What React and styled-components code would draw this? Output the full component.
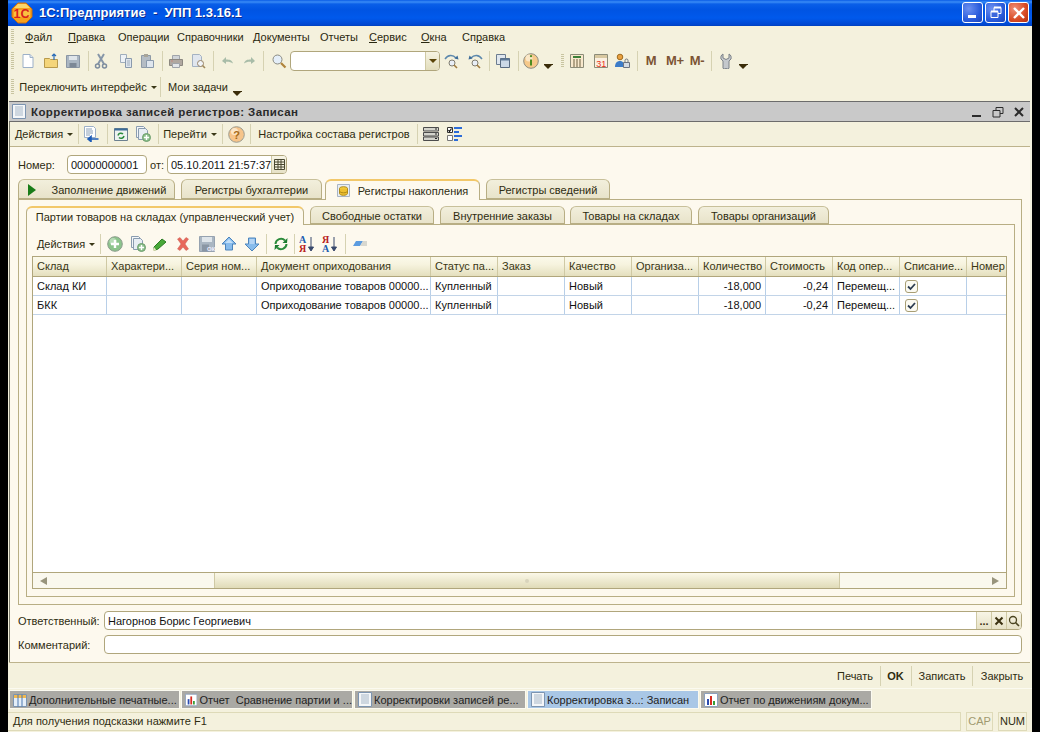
import React from 'react';
import styled, { createGlobalStyle } from 'styled-components';

const Global = createGlobalStyle`
  html, body { margin: 0; padding: 0; background: #000; }
  * { box-sizing: border-box; }
  body { font-family: "Liberation Sans", Arial, sans-serif; font-size: 11px; color: #2e2c10; }
`;

const Page = styled.div`
  width: 1040px; height: 732px; background: #000; padding: 0 8px; overflow: hidden;
`;
const Win = styled.div`
  height: 732px; background: #f4f1dd; display: flex; flex-direction: column;
`;
const TitleBar = styled.div`
  height: 26px; flex: none; display: flex; align-items: center; padding: 0 3px 1px 3px;
  background: linear-gradient(#0a5ce6 0, #3a8cf6 2px, #0a5fe8 4px, #0054e3 10px, #0059ec 18px, #0046cf 25px, #0040b8 26px);
`;
const TitleText = styled.div`
  margin-left: 6px; flex: 1; font-size: 13px; font-weight: bold; color: #fff; letter-spacing: 0;
  text-shadow: 1px 1px 0 #0a2a90; white-space: pre;
`;
const WinBtn = styled.div`
  width: 21px; height: 21px; margin-left: 2px; border: 1px solid #fff; border-radius: 3px;
  display: flex; align-items: center; justify-content: center;
  background: ${p => p.$close ? 'radial-gradient(circle at 30% 30%, #f09078, #d84a24 60%, #b03010)' : 'radial-gradient(circle at 30% 30%, #6c90f0, #2a5cdc 60%, #1c44b8)'};
`;
const Bar = styled.div`
  flex: none; height: ${p => p.$h}px; display: flex; align-items: center; padding-left: 3px; color: #2e2c10;
`;
const Grip = styled.div`
  width: 3px; height: ${p => p.$h || 18}px; flex: none; margin-right: ${p => p.$mr ?? 5}px;
  background: repeating-linear-gradient(#c8c4a0 0 1px, #f4f1dd 1px 2px);
`;
const MenuItem = styled.div`
  width: ${p => p.$w}px; flex: none; font-size: 11px; color: #2a2810; white-space: nowrap;
  u { text-underline-offset: 1px; }
`;
const Slot = styled.div`
  width: ${p => p.$w}px; margin-left: ${p => p.$ml || 0}px; flex: none; display: flex; align-items: center; justify-content: center;
  white-space: nowrap; height: 100%; color: #2e2c10; font-size: 11px;
  font-weight: ${p => p.$bold ? 'bold' : 'normal'};
`;
const Sep = styled.div`
  width: 1px; height: ${p => p.$h || 20}px; flex: none; background: #d6d2b2;
`;
const Combo = styled.div`
  width: 150px; height: 20px; flex: none; border: 1px solid #b0a67c; border-radius: 4px; background: #fff;
  display: flex; justify-content: flex-end; overflow: hidden;
`;
const ComboBtn = styled.div`
  width: 14px; background: linear-gradient(#f6f3e2, #e2ddbc); border-left: 1px solid #cfc9a4;
  display: flex; align-items: center; justify-content: center;
`;
const Caret = styled.span`
  display: inline-block; width: 0; height: 0; margin-left: 4px; margin-top: 1px;
  border-left: 3px solid transparent; border-right: 3px solid transparent; border-top: 3px solid #3a3818;
`;
const ComboCaret = styled.span`
  display: block; width: 0; height: 0;
  border-left: 4px solid transparent; border-right: 4px solid transparent; border-top: 4px solid #5a4408;
`;
const DropMark = styled.span`
  display: block; width: 9px; margin-top: 12px; border-top: 1px solid #3a2c08;
  &::after { content: ''; display: block; width: 0; height: 0; margin: 0 auto;
    border-left: 4px solid transparent; border-right: 4px solid transparent; border-top: 4px solid #3a2c08; }
`;
const MBtn = styled.span`
  font-size: 13px; font-weight: bold; color: #7c5434; letter-spacing: -.3px;
`;
const Mdi = styled.div`
  flex: 1; min-height: 0; display: flex; flex-direction: column; margin: 0 2px 0 1px;
  border-left: 1px solid #7a7a6a;
`;
const DocHead = styled.div`
  height: 21px; flex: none; background: #c9c9c9; border-top: 1px solid #6c6c6c; border-bottom: 1px solid #6c6c6c;
  display: flex; align-items: center; padding-left: 3px; margin-left: -1px;
`;
const DocTitle = styled.div`
  flex: 1; margin-left: 5px; font-weight: bold; font-size: 11.5px; letter-spacing: .4px; color: #2a2a2a;
`;
const DocTool = styled(Bar)`
  height: 25px; border-bottom: 1px solid #bdb38c; padding-left: 0;
`;
const Form = styled.div`
  flex: 1; min-height: 0; background: #fdf9ee; display: flex; flex-direction: column; padding: 8px;
`;
const Row = styled.div`
  display: flex; align-items: center; height: 19px; flex: none; color: #2e2c10; margin-top: ${p => p.$mt || 0}px;
`;
const Label = styled.div`
  width: ${p => p.$w}px; flex: none; white-space: nowrap; padding-left: ${p => p.$pl || 0}px;
`;
const Input = styled.div`
  width: ${p => p.$w ? p.$w + 'px' : 'auto'}; flex: ${p => p.$w ? 'none' : 1}; height: 19px; border: 1px solid #b0a67c; border-radius: 4px;
  background: #fff; color: #111; display: flex; align-items: center; padding-left: 3px; overflow: hidden;
  justify-content: space-between; white-space: nowrap;
`;
const InBtn = styled.div`
  width: ${p => p.$w || 15}px; height: 100%; flex: none; background: linear-gradient(#f8f5e6, #e6e1c6);
  border-left: 1px solid #cfc9a4; display: flex; align-items: center; justify-content: center;
  font-weight: bold; color: #3a3010;
`;
const InBtns = styled.div`display: flex; height: 100%;`;
const Tabs = styled.div`
  display: flex; flex: none; margin-top: ${p => p.$mt}px; height: ${p => p.$h}px; align-items: flex-end;
`;
const Tab = styled.div`
  width: ${p => p.$w}px; flex: none; margin-right: ${p => p.$gap}px; height: ${p => p.$active ? p.$h + 1 : p.$h}px;
  margin-bottom: ${p => p.$active ? -1 : 0}px; position: relative; z-index: 1;
  padding-top: ${p => p.$active ? 0 : 1}px;
  border: 1px solid #b8ae84; border-bottom: ${p => p.$active ? 'none' : '1px solid #b8ae84'};
  border-top: ${p => p.$active ? '2px solid #f2c86a' : '1px solid #c8c09a'};
  border-radius: 6px 6px 0 0;
  background: ${p => p.$active ? '#fdf9ee' : 'linear-gradient(#f2efdc, #e8e3ca)'};
  display: flex; align-items: center; justify-content: center; gap: 8px; white-space: nowrap;
  color: #2e2c10; font-size: 11px;
`;
const TabLabel = styled.span`margin-left: ${p => p.$ml || 0}px;`;
const Panel = styled.div`
  flex: 1; min-height: 0; border: 1px solid #b8ae84; display: flex; flex-direction: column;
  padding: ${p => p.$pad};
`;
const GridTool = styled(Bar)`
  height: 25px; padding-left: 0;
`;
const Table = styled.div`
  flex: 1; min-height: 0; border: 1px solid #b0a67c; background: #fff; display: flex; flex-direction: column;
`;
const HeadRow = styled.div`
  display: flex; height: 20px; flex: none; border-bottom: 1px solid #b0a67c;
  background: linear-gradient(#fbf9ea, #f6f3de 40%, #e4dfbe);
`;
const HeadCell = styled.div`
  width: ${p => p.$w}px; flex: none; padding-left: 4px; border-right: 1px solid #cfc9a4; line-height: 19px;
  white-space: nowrap; overflow: hidden; color: #3a3714; &:last-child { border-right: none; }
`;
const DataRow = styled.div`
  display: flex; height: 19px; flex: none; border-bottom: 1px solid #c2d4e8;
`;
const Cell = styled.div`
  width: ${p => p.$w}px; flex: none; padding: 0 4px; border-right: 1px solid #b8cfe8; line-height: 18px; white-space: nowrap;
  overflow: hidden; color: #111; text-align: ${p => p.$right ? 'right' : 'left'};
  &:last-child { border-right: none; }
`;
const Check = styled.div`
  width: 13px; height: 13px; margin: 3px 0 0 1px; border: 1px solid #a89e74; border-radius: 3px; background: #fbfaf2;
  display: flex; align-items: center; justify-content: center;
`;
const Blank = styled.div`flex: 1; min-height: 0;`;
const Scroll = styled.div`
  height: 16px; flex: none; border-top: 1px solid #b0a67c; display: flex; background: #faf8ee;
`;
const ScrollBtn = styled.div`
  width: 21px; flex: none; display: flex; align-items: center; justify-content: center;
`;
const Track = styled.div`width: ${p => p.$w}px; flex: none;`;
const Thumb = styled.div`
  flex: 1; background: linear-gradient(#fbf8e8, #e0dbb8); display: flex; align-items: center; justify-content: center;
  border-left: 1px solid #cfc9a4; border-right: 1px solid #cfc9a4;
`;
const Dot = styled.div`width: 4px; height: 4px; border-radius: 50%; background: #d8d4bc;`;
const Arrow = styled.div`
  width: 0; height: 0; border-top: 4px solid transparent; border-bottom: 4px solid transparent;
  ${p => p.$dir === 'l' ? 'border-right: 7px solid #98947c;' : 'border-left: 7px solid #98947c;'}
`;
const Cmd = styled.div`
  height: 26px; flex: none; border-top: 1px solid #bdb38c; background: #f4f1dd; display: flex; align-items: center;
  margin-left: -1px;
`;
const Task = styled.div`
  height: 22px; flex: none; border-top: 1px solid #fbfaf0; background: #f4f1dd; display: flex; align-items: center; padding: 0 0 0 1px; gap: 1px;
`;
const TaskTab = styled.div`
  width: ${p => p.$w}px; height: 19px; flex: none; border: 1px solid #fbfaf0; display: flex; align-items: center; gap: 2px; padding-left: 3px;
  background: ${p => p.$active ? '#a9c7e6' : '#aaa9a4'}; color: #222; white-space: pre; overflow: hidden;
`;
const Status = styled.div`
  height: 22px; flex: none; display: flex; align-items: center; padding: 0 5px 0 0; gap: 5px;
`;
const StatusMain = styled.div`
  flex: 1; height: 19px; line-height: 17px; padding-left: 5px; border: 1px solid #dedab8; border-left: none; color: #2e2c10;
`;
const StatusKey = styled.div`
  width: ${p => p.$w}px; height: 19px; border: 1px solid #dedab8; line-height: 17px; text-align: center;
  color: ${p => p.$off ? '#a09a70' : '#2e2c10'};
`;

const Ic = ({ children, w = 16, h = 16 }) => <svg width={w} height={h} viewBox={`0 0 ${w} ${h}`}>{children}</svg>;

const icons = {
  logo: <Ic w={22} h={22}><path d="M7 1h8l6 6v8l-6 6H7l-6-6V7z" fill="#f6a01c" stroke="#c86c10"/><path d="M7 2h8l4 4H3z" fill="#fbd56a"/><path d="M3 8h16v7H3z" fill="#fbc040"/><text x="2.500" y="16" fontFamily="Liberation Sans" fontSize="12.500" fontWeight="bold" fill="#d8201c">1С</text></Ic>,
  doc: <Ic><path d="M3 1.500h7l3 3v10H3z" fill="#fff" stroke="#9cb0c8"/><path d="M10 1.500v3h3" fill="#dce6f0" stroke="#9cb0c8"/></Ic>,
  open: <Ic><path d="M1.500 5.500h5l1 1h7v8h-13z" fill="#f4d57a" stroke="#b89a4c"/><path d="M11 1v6M9 3l2-2 2 2" fill="none" stroke="#2a6cb8" strokeWidth="1.200"/></Ic>,
  save: <Ic><path d="M1.500 2.500h13v12h-13z" fill="#aab6c2" stroke="#8a96a4"/><path d="M4 3h8v4H4z" fill="#dfe5ea"/><path d="M4.500 10h7v4.500h-7z" fill="#7c8896"/></Ic>,
  cut: <Ic><path d="M5 1l6 10M11 1L5 11" stroke="#8696a8" strokeWidth="2" fill="none"/><circle cx="4.500" cy="13" r="2" fill="none" stroke="#7c8c9e" strokeWidth="1.500"/><circle cx="11.500" cy="13" r="2" fill="none" stroke="#7c8c9e" strokeWidth="1.500"/></Ic>,
  copy: <Ic><path d="M2.500 1.500h6v8h-6z" fill="#eef2f6" stroke="#a0aebc"/><path d="M7.500 5.500h6v9h-6z" fill="#dfe6ee" stroke="#8a9aac"/><path d="M9 8h3M9 10h3M9 12h3" stroke="#a0aebc"/></Ic>,
  paste: <Ic><path d="M2.500 2.500h9v12h-9z" fill="#b4bcc4" stroke="#8e9aa6"/><path d="M5 1h4v3H5z" fill="#a8a498"/><path d="M7.500 7.500h7v7h-7z" fill="#dfe6ee" stroke="#8a9aac"/></Ic>,
  print: <Ic><path d="M4.500 2.500h7v4h-7z" fill="#d0d4d8" stroke="#a0a4aa"/><path d="M1.500 6.500h13v6h-13z" fill="#b0a8a0" stroke="#8c8880"/><path d="M4.500 10.500h7v4h-7z" fill="#e4e6e8" stroke="#a0a4aa"/><path d="M3 8h2" stroke="#c08880"/></Ic>,
  preview: <Ic><path d="M2.500 1.500h7l2 2v10h-9z" fill="#e0e6ee" stroke="#a4b2c2"/><circle cx="10.500" cy="10.500" r="3" fill="#f0f4f8" stroke="#988468"/><path d="M12.500 12.500l2.500 2.500" stroke="#a08a5c" strokeWidth="1.600"/></Ic>,
  undo: <Ic><path d="M2 8l4-4v2.500c4 0 6 .5 7 4-2-1.500-4-2-7-1.800V11z" fill="#a8bca8"/></Ic>,
  redo: <Ic><path d="M14 8l-4-4v2.500c-4 0-6 .5-7 4 2-1.500 4-2 7-1.800V11z" fill="#a8bca8"/></Ic>,
  find: <Ic><circle cx="6.500" cy="6.500" r="4.500" fill="#e4eef8" stroke="#8a8a80"/><path d="M10 10l4.500 4.500" stroke="#b0843c" strokeWidth="2.200"/></Ic>,
  findNext: <Ic><circle cx="8" cy="10" r="3" fill="#e8eef6" stroke="#807c70"/><path d="M10 12l3 3" stroke="#a07c40" strokeWidth="1.600"/><path d="M1 6c3-4.500 8-4.500 11-1" stroke="#5c88ac" fill="none" strokeWidth="1.400"/><path d="M14.500 6.500l-1-4-3 3z" fill="#3c6c98"/></Ic>,
  findPrev: <Ic><circle cx="8" cy="10" r="3" fill="#e8eef6" stroke="#807c70"/><path d="M10 12l3 3" stroke="#a07c40" strokeWidth="1.600"/><path d="M15 6c-3-4.500-8-4.500-11-1" stroke="#5c88ac" fill="none" strokeWidth="1.400"/><path d="M1.500 6.500l1-4 3 3z" fill="#3c6c98"/></Ic>,
  windows: <Ic><path d="M1.500 1.500h9v10h-9z" fill="#dfe6ee" stroke="#6c7c90"/><path d="M5.500 5.500h9v9h-9z" fill="#cbd8e6" stroke="#586a80"/><path d="M5.500 5.500h9v2h-9z" fill="#5c7896"/></Ic>,
  info: <Ic><circle cx="8" cy="8" r="7.300" fill="#f6c98a" stroke="#8c8c80"/><circle cx="6" cy="5" r="3.500" fill="#fbe8c8"/><path d="M8 3.200h.01" stroke="#4c8c20" strokeWidth="2.200" strokeLinecap="round"/><path d="M8 6.500v6" stroke="#4c8c20" strokeWidth="2"/></Ic>,
  calc: <Ic w={14} h={14}><path d="M.5.500h13v13H.5z" fill="#f8e8cc" stroke="#8c8c78"/><path d="M3 2h8v2H3z" fill="#3c8038"/><path d="M3 6h2M6 6h2M9 6h2M3 8h2M6 8h2M9 8h2M3 10h2M6 10h2M9 10h2M3 12h2M6 12h2M9 12h2" stroke="#6c6040"/></Ic>,
  cal: <Ic w={14} h={14}><path d="M.5.500h13v13H.5z" fill="#fbf0e0" stroke="#8c8c78"/><path d="M1 1h12v3H1z" fill="#d8c8a0"/><text x="2.200" y="12.500" fontFamily="Liberation Sans" fontSize="9" fill="#e83018">31</text></Ic>,
  userLock: <Ic><circle cx="6" cy="4" r="2.800" fill="#e8a040" stroke="#a06c20"/><path d="M1 14c0-4 2-6 5-6s4 2 4 6z" fill="#3c7cc8"/><path d="M9.500 9.500h6v5h-6z" fill="#d4dce4" stroke="#6c7480"/><path d="M11 9.500v-2a1.500 1.500 0 0 1 3 0v2" fill="none" stroke="#6c7480"/></Ic>,
  wrench: <Ic><path d="M5 1v4l3 1.500L11 5V1c2 1 2.500 3 2 5l-2 2v6a1.500 1.500 0 0 1-3 1 1.500 1.500 0 0 1-3-1V8L3 6C2.500 4 3 2 5 1z" fill="#c4c8cc" stroke="#7c8288"/></Ic>,
  docArrow: <Ic><path d="M1.500.5h9l2 2v9h-11z" fill="#fff" stroke="#9cb0c8"/><path d="M3 3h6M3 5h7M3 7h7M3 9h4" stroke="#8aa0b8"/><path d="M15.500 13H8M8 10.500L5 13l3 2.500z" stroke="#1c5cb8" fill="#1c5cb8" strokeWidth="1.600"/></Ic>,
  winRefresh: <Ic><path d="M1.500 2.500h13v12h-13z" fill="#eef2f0" stroke="#6c8090"/><path d="M1.500 2.500h13v2h-13z" fill="#3c6c98"/><path d="M5 9.500a3 3 0 0 1 5-1.500M11 10a3 3 0 0 1-5 1.500" stroke="#2c8c3c" fill="none" strokeWidth="1.500"/></Ic>,
  copyAdd: <Ic><path d="M1.500.5h7l2 2v9h-9z" fill="#f4f6f8" stroke="#8a9cb0"/><path d="M3.500 2.500h7l2 2v9h-9z" fill="#e8eef4" stroke="#8a9cb0"/><circle cx="11.500" cy="11.500" r="4" fill="#8cc08c" stroke="#6c9c6c"/><path d="M11.500 9v5M9 11.500h5" stroke="#fff" strokeWidth="1.400"/></Ic>,
  help: <Ic w={17} h={17}><circle cx="8.500" cy="8.500" r="7.800" fill="#f6c48a" stroke="#9c9c90"/><circle cx="6.500" cy="5.500" r="3.500" fill="#fbe6c8"/><text x="5.200" y="13" fontFamily="Liberation Sans" fontSize="11" fontWeight="bold" fill="#a86a18">?</text></Ic>,
  rows: <Ic><path d="M.5 1.500h15v3.500H.5zM.5 6.500h15v3.500H.5zM.5 11h15v3.500H.5z" fill="#d4d4cc" stroke="#4c4c4c"/><path d="M12 2.500h2v1h-2zM12 7.500h2v1h-2zM12 12h2v1h-2z" fill="#222"/></Ic>,
  checks: <Ic><path d="M.5 1.500h5v5h-5z" fill="#fff" stroke="#333"/><path d="M1.500 4l1 1.500 2-3" stroke="#111" fill="none" strokeWidth="1.200"/><path d="M.5 9.500h5v5h-5z" fill="#fff" stroke="#777"/><path d="M7 1h8v2H7zM7 5h5v2H7zM7 9h8v2H7zM7 13h4v2H7z" fill="#2c6cd8"/></Ic>,
  add: <Ic><circle cx="8" cy="8" r="7.300" fill="#8cc48c" stroke="#8c9c8c"/><circle cx="6" cy="5.500" r="3.500" fill="#b8dcb8"/><path d="M8 4v8M4 8h8" stroke="#fff" strokeWidth="2.400"/></Ic>,
  pencil: <Ic><path d="M2 11l8-8 4 3-8 7-4 1.500z" fill="#48a838" stroke="#2c7c24"/><path d="M2 11l2.500 3.500L1 15z" fill="#e8e4c0"/></Ic>,
  del: <Ic><path d="M2.500 3L5 1.500 8 5l3-3.500L13.500 3 10 8l3.500 5-2.500 1.500L8 11l-3 3.500L2.500 13 6 8z" fill="#e8685c" stroke="#c85c50" strokeWidth=".5"/></Ic>,
  saveOk: <Ic><path d="M.5.5h15v15H.5z" fill="#aab6c2" stroke="#96a2b0"/><path d="M3 1h10v5H3z" fill="#dfe5ea"/><path d="M3 8.500h7v7H3z" fill="#8a96a4"/><text x="8" y="15" fontFamily="Liberation Sans" fontSize="6" fontWeight="bold" fill="#eef">ОК</text></Ic>,
  up: <Ic><path d="M8 1l7 7h-3.500v6h-7V8H1z" fill="#88bcec" stroke="#4c84bc"/><path d="M8 3l4 4H4z" fill="#c4e0f8"/></Ic>,
  down: <Ic><path d="M8 15L1 8h3.500V2h7v6H15z" fill="#88bcec" stroke="#4c84bc"/><path d="M5.500 3h5v5h-5z" fill="#b4d4f4"/></Ic>,
  refresh: <Ic><path d="M2.500 8a5.500 5.500 0 0 1 9.500-3.500M13.500 8A5.500 5.500 0 0 1 4 11.500" stroke="#2c8c3c" strokeWidth="2" fill="none"/><path d="M14.500 2l-.5 5h-4.500zM1.500 14l.5-5h4.500z" fill="#1c7c30"/></Ic>,
  sortAz: <Ic w={20} h={18}><text x="0" y="8" fontFamily="Liberation Serif" fontSize="10" fontWeight="bold" fill="#1c5cb0">A</text><text x="0" y="17" fontFamily="Liberation Serif" fontSize="10" fontWeight="bold" fill="#b82020">Я</text><path d="M12 2v13M9.500 12l2.500 4 2.500-4z" stroke="#38486c" fill="#38486c"/></Ic>,
  sortZa: <Ic w={20} h={18}><text x="0" y="8" fontFamily="Liberation Serif" fontSize="10" fontWeight="bold" fill="#b82020">Я</text><text x="0" y="17" fontFamily="Liberation Serif" fontSize="10" fontWeight="bold" fill="#1c5cb0">A</text><path d="M12 2v13M9.500 12l2.500 4 2.500-4z" stroke="#38486c" fill="#38486c"/></Ic>,
  eraser: <Ic><path d="M1 10l3-5h7l-3 5z" fill="#5c9ce0"/><path d="M8 10l3-5h4v5z" fill="#d8d8d0"/></Ic>,
  play: <Ic w={10} h={14}><path d="M1 1l8 6-8 6z" fill="#187c18"/></Ic>,
  coins: <Ic w={13} h={13}><path d="M.5.5h12v12H.5z" fill="#e8eef4" stroke="#a8b4c4"/><ellipse cx="6.500" cy="4.500" rx="4" ry="1.800" fill="#f4d040" stroke="#b08a18"/><path d="M2.500 4.500v5c0 1 1.800 1.800 4 1.800s4-.8 4-1.800v-5" fill="#eec030" stroke="#b08a18"/><path d="M2.500 7c0 1 1.800 1.800 4 1.800s4-.8 4-1.800" fill="none" stroke="#b08a18"/></Ic>,
  tblTask: <Ic w={14} h={14}><path d="M.5 1.500h13v12H.5z" fill="#e4eef8" stroke="#7c94b0"/><path d="M1 2h12v3H1z" fill="#f0b850"/><path d="M5 1.500v12M9 1.500v12" stroke="#4c78b0"/></Ic>,
  chart: <Ic w={14} h={14}><path d="M.5.5h13v13H.5z" fill="#fff" stroke="#8ca0bc"/><path d="M3 6h2v6H3z" fill="#2c4cb0"/><path d="M6 3h2v9H6z" fill="#d82c20"/><path d="M9 8h2v4H9z" fill="#38a038"/></Ic>,
  docTask: <Ic w={14} h={15}><path d="M.5.5h13v14H.5z" fill="#f4f6f8" stroke="#7c94b0"/><path d="M3 3h8M3 5h8M3 7h8M3 9h8M3 11h8" stroke="#a8b8c8"/></Ic>,
  check: <Ic w={9} h={9}><path d="M1 4.500l2.500 2.500L8 2" fill="none" stroke="#2c3c50" strokeWidth="1.800"/></Ic>,
  tinyX: <Ic w={10} h={10}><path d="M1.500 1.500l7 7M8.500 1.500l-7 7" stroke="#3a3010" strokeWidth="2"/></Ic>,
  tinyFind: <Ic w={12} h={12}><circle cx="5" cy="5" r="3.500" fill="none" stroke="#4a4420" strokeWidth="1.300"/><path d="M7.500 7.500l3.500 3.500" stroke="#4a4420" strokeWidth="1.600"/></Ic>,
  dateBtn: <Ic w={11} h={11}><path d="M.5.5h10v10H.5z" fill="#f6f3e2" stroke="#4a4830"/><path d="M.5 3h10M.5 5.500h10M.5 8h10M4 .5v10M7 .5v10" stroke="#4a4830"/></Ic>,
  min: <Ic w={10} h={10}><path d="M0 7h8v3H0z" fill="#fff"/></Ic>,
  max: <Ic w={14} h={14}><path d="M5 1.500h7v6H5z" fill="none" stroke="#fff"/><path d="M5 1.500h7" stroke="#fff" strokeWidth="2"/><path d="M2 5.500h7v6H2z" fill="#3a66dc" stroke="#fff"/><path d="M2 5.500h7" stroke="#fff" strokeWidth="2"/></Ic>,
  close: <Ic w={14} h={14}><path d="M2 2l10 10M12 2L2 12" stroke="#fff" strokeWidth="2.400"/></Ic>,
  dMin: <Ic w={12} h={12}><path d="M1 9h9v2H1z" fill="#2c2c2c"/></Ic>,
  dMax: <Ic w={12} h={12}><path d="M4 1.500h7v6H4z" fill="none" stroke="#2c2c2c"/><path d="M1 4.500h7v6.500H1z" fill="#c9c9c9" stroke="#2c2c2c"/></Ic>,
  dClose: <Ic w={12} h={12}><path d="M2 2l8 8M10 2l-8 8" stroke="#2c2c2c" strokeWidth="2"/></Ic>,
};

// Each item: [centre x, node, width, bold]. The gaps between items follow from the centres.
const Items = ({ start, items }) => {
  let edge = start;
  return items.map((it, i) => {
    const w = it[1] === '|' ? 1 : (it[2] || 16);
    const left = it[0] - w / 2;
    const ml = left - edge;
    edge = left + w;
    return <Slot key={i} $w={w} $ml={ml} $bold={it[3]}>{it[1] === '|' ? <Sep /> : it[1]}</Slot>;
  });
};

const Txt = ({ t }) => <>{t}<Caret /></>;

const menu = [
  [<><u>Ф</u>айл</>, 43], [<><u>П</u>равка</>, 50], ['Операции', 59], ['Справочники', 76], ['Документы', 67],
  ['Отчеты', 49], [<><u>С</u>ервис</>, 52], [<><u>О</u>кна</>, 41], [<>Сп<u>р</u>авка</>, 60],
];

const tb1 = [
  [28, icons.doc], [51, icons.open], [73, icons.save], [88, '|'], [101, icons.cut], [126, icons.copy], [147, icons.paste], [162, '|'],
  [176, icons.print], [198, icons.preview], [213, '|'], [228, icons.undo], [249, icons.redo], [263, '|'], [279, icons.find],
  [365, <Combo><ComboBtn><ComboCaret /></ComboBtn></Combo>, 150], [452, icons.findNext], [475, icons.findPrev], [489, '|'], [503, icons.windows],
  [518, '|'], [531, icons.info], [548, <DropMark />, 9], [562, <Grip $h={14} $mr={0} />, 3], [577, icons.calc], [601, icons.cal], [622, icons.userLock], [637, '|'],
  [651, <MBtn>M</MBtn>], [675, <MBtn>M+</MBtn>, 20], [697, <MBtn>M-</MBtn>, 20], [711, '|'], [726, icons.wrench], [743, <DropMark />, 9],
];
const tb2 = [[88, <Txt t="Переключить интерфейс" />, 140], [160, '|'], [198, 'Мои задачи', 62], [237, <DropMark />, 9]];
const docTb = [
  [44, <Txt t="Действия" />, 60], [78, '|'], [91, icons.docArrow], [107, '|'], [121, icons.winRefresh], [143, icons.copyAdd], [158, '|'],
  [190, <Txt t="Перейти" />, 54], [222, '|'], [236, icons.help, 17], [250, '|'], [334, 'Настройка состава регистров', 156], [417, '|'], [431, icons.rows], [455, icons.checks],
];
const gridTb = [
  [66, <Txt t="Действия" />, 60], [100, '|'], [115, icons.add], [138, icons.copyAdd], [160, icons.pencil], [183, icons.del], [207, icons.saveOk],
  [229, icons.up], [252, icons.down], [266, '|'], [281, icons.refresh], [294, '|'], [309, icons.sortAz, 20], [332, icons.sortZa, 20], [345, '|'], [360, icons.eraser],
];
const cols = [
  ['Склад', 74], ['Характери...', 75], ['Серия ном...', 75], ['Документ оприходования', 174], ['Статус па...', 67], ['Заказ', 67],
  ['Качество', 67], ['Организа...', 67], ['Количество', 67], ['Стоимость', 67], ['Код опер...', 67], ['Списание...', 67], ['Номер', 41],
];
const rows = [['Склад КИ'], ['БКК']];
const outerTabs = [
  [157, 6, <>{icons.play}<TabLabel $ml={7}>Заполнение движений</TabLabel></>], [141, 3, 'Регистры бухгалтерии'],
  [155, 6, <>{icons.coins}Регистры накопления</>, true], [124, 0, 'Регистры сведений'],
];
const innerTabs = [
  [278, 6, 'Партии товаров на складах (управленческий учет)', true], [124, 6, 'Свободные остатки'], [125, 5, 'Внутренние заказы'],
  [122, 6, 'Товары на складах'], [131, 0, 'Товары организаций'],
];
const tasks = [
  [171, icons.tblTask, 'Дополнительные печатные...'], [172, icons.chart, 'Отчет  Сравнение партии и ...'], [172, icons.docTask, 'Корректировки записей ре...'],
  [172, icons.docTask, 'Корректировка з...: Записан', true], [172, icons.chart, 'Отчет по движениям докум...'],
];
const cmd = [[855, 'Печать', 38], [880, '|'], [895.5, 'OK', 20, true], [911, '|'], [942, 'Записать', 50], [972, '|'], [1002, 'Закрыть', 44]];

export default function App() {
  return (
    <Page>
      <Global />
      <Win>
        <TitleBar>
          {icons.logo}
          <TitleText>1С:Предприятие  -  УПП 1.3.16.1</TitleText>
          <WinBtn>{icons.min}</WinBtn><WinBtn>{icons.max}</WinBtn><WinBtn $close>{icons.close}</WinBtn>
        </TitleBar>
        <Bar $h={22}>
          <Grip $mr={11} $h={16} />
          {menu.map((m, i) => <MenuItem key={i} $w={m[1]}>{m[0]}</MenuItem>)}
        </Bar>
        <Bar $h={25}><Grip $mr={0} /><Items start={14} items={tb1} /></Bar>
        <Bar $h={28}><Grip $mr={0} $h={16} /><Items start={14} items={tb2} /></Bar>
        <Mdi>
          <DocHead>
            {icons.docTask}
            <DocTitle>Корректировка записей регистров: Записан</DocTitle>
            <Slot $w={23}>{icons.dMin}</Slot><Slot $w={20}>{icons.dMax}</Slot><Slot $w={22}>{icons.dClose}</Slot>
          </DocHead>
          <DocTool><Items start={10} items={docTb} /></DocTool>
          <Form>
            <Row>
              <Label $w={49}>Номер:</Label>
              <Input $w={80}>00000000001</Input>
              <Label $w={20} $pl={3}>от:</Label>
              <Input $w={120}>05.10.2011 21:57:37<InBtn>{icons.dateBtn}</InBtn></Input>
            </Row>
            <Tabs $mt={5} $h={20}>
              {outerTabs.map((t, i) => <Tab key={i} $w={t[0]} $gap={t[1]} $active={t[3]} $h={20}>{t[2]}</Tab>)}
            </Tabs>
            <Panel $pad="6px 6px 7px 7px">
              <Tabs $mt={0} $h={18}>
                {innerTabs.map((t, i) => <Tab key={i} $w={t[0]} $gap={t[1]} $active={t[3]} $h={18}>{t[2]}</Tab>)}
              </Tabs>
              <Panel $pad="6px 7px 7px 5px">
                <GridTool><Items start={32} items={gridTb} /></GridTool>
                <Table>
                  <HeadRow>{cols.map(c => <HeadCell key={c[0]} $w={c[1]}>{c[0]}</HeadCell>)}</HeadRow>
                  {rows.map(r => (
                    <DataRow key={r[0]}>
                      <Cell $w={74}>{r[0]}</Cell><Cell $w={75} /><Cell $w={75} />
                      <Cell $w={174}>Оприходование товаров 00000...</Cell>
                      <Cell $w={67}>Купленный</Cell><Cell $w={67} /><Cell $w={67}>Новый</Cell><Cell $w={67} />
                      <Cell $w={67} $right>-18,000</Cell><Cell $w={67} $right>-0,24</Cell>
                      <Cell $w={67}>Перемещ...</Cell>
                      <Cell $w={67}><Check>{icons.check}</Check></Cell><Cell $w={41} />
                    </DataRow>
                  ))}
                  <Blank />
                  <Scroll>
                    <ScrollBtn><Arrow $dir="l" /></ScrollBtn>
                    <Track $w={160} />
                    <Thumb><Dot /></Thumb>
                    <Track $w={145} />
                    <ScrollBtn><Arrow $dir="r" /></ScrollBtn>
                  </Scroll>
                </Table>
              </Panel>
            </Panel>
            <Row $mt={6}>
              <Label $w={86}>Ответственный:</Label>
              <Input>Нагорнов Борис Георгиевич
                <InBtns><InBtn $w={15}>...</InBtn><InBtn $w={15}>{icons.tinyX}</InBtn><InBtn $w={15}>{icons.tinyFind}</InBtn></InBtns>
              </Input>
            </Row>
            <Row $mt={5}>
              <Label $w={86}>Комментарий:</Label>
              <Input />
            </Row>
          </Form>
          <Cmd><Items start={9} items={cmd} /></Cmd>
        </Mdi>
        <Task>
          {tasks.map((t, i) => <TaskTab key={i} $w={t[0]} $active={t[3]}>{t[1]}{t[2]}</TaskTab>)}
        </Task>
        <Status>
          <StatusMain>Для получения подсказки нажмите F1</StatusMain>
          <StatusKey $w={27} $off>CAP</StatusKey>
          <StatusKey $w={29}>NUM</StatusKey>
        </Status>
      </Win>
    </Page>
  );
}
